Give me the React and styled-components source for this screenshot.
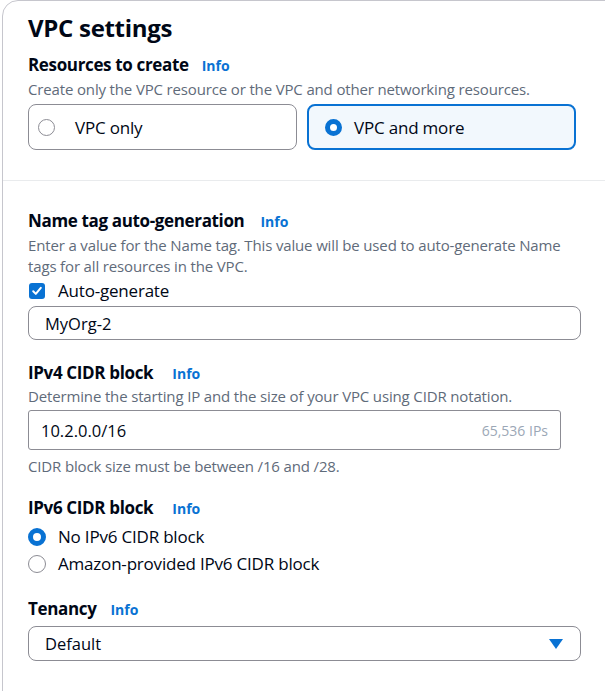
import React from "react";
import styled, { createGlobalStyle } from "styled-components";

const GlobalStyle = createGlobalStyle`
  html, body {
    margin: 0;
    padding: 0;
    background: #fff;
    overflow: hidden;
  }
  body {
    font-family: "Open Sans", "Noto Sans", sans-serif;
    color: #000716;
  }
`;

const Card = styled.div`
  margin-left: 2px;
  width: 640px;
  border: 1px solid #c6c6cd;
  border-radius: 16px;
  box-sizing: border-box;
  height: 720px;
`;

const Section = styled.div`
  padding: ${(p) => p.$pad};
  display: flex;
  flex-direction: column;
  border-bottom: ${(p) => (p.$divider ? "1px solid #e9ebed" : "none")};
`;

const Heading = styled.h2`
  margin: 0;
  font-size: 24px;
  line-height: 30px;
  font-weight: 700;
  letter-spacing: -0.3px;
`;

const LabelRow = styled.div`
  display: flex;
  align-items: baseline;
  gap: ${(p) => p.$gap || 15}px;
  margin-top: ${(p) => p.$mt}px;
  line-height: 22px;
`;

const Label = styled.span`
  font-size: 17px;
  font-weight: 700;
  letter-spacing: -0.35px;
`;

const InfoLink = styled.a`
  font-size: 14px;
  font-weight: 700;
  color: #0972d3;
  text-decoration: none;
`;

const Description = styled.div`
  margin-top: ${(p) => p.$mt}px;
  font-size: 15px;
  line-height: ${(p) => p.$lh || 20}px;
  color: #5f6b7a;
  letter-spacing: -0.15px;
  max-width: ${(p) => p.$maxw || "none"};
`;

const Tiles = styled.div`
  display: grid;
  grid-template-columns: 269px 269px;
  gap: 10px;
  margin-top: 5px;
`;

const Tile = styled.div`
  box-sizing: border-box;
  height: 46px;
  display: flex;
  align-items: center;
  gap: ${(p) => (p.$selected ? 12 : 20)}px;
  padding-left: ${(p) => (p.$selected ? 16 : 9)}px;
  border-radius: 8px;
  border: ${(p) => (p.$selected ? "2px solid #0972d3" : "1px solid #8c8c94")};
  background: ${(p) => (p.$selected ? "#f2f8fd" : "#fff")};
  font-size: 17px;
  letter-spacing: -0.2px;
`;

const Radio = styled.span`
  box-sizing: border-box;
  flex: none;
  width: ${(p) => p.$size || 18}px;
  height: ${(p) => p.$size || 18}px;
  border-radius: 50%;
  background: #fff;
  border: ${(p) => (p.$checked ? "5px solid #0972d3" : "1.5px solid #8c8c94")};
`;

const OptionRow = styled.label`
  display: flex;
  align-items: center;
  gap: 12px;
  height: 27px;
  font-size: 17px;
  letter-spacing: -0.2px;
  margin-top: ${(p) => p.$mt || 0}px;
`;

const CheckBox = styled.span`
  flex: none;
  width: 16px;
  height: 16px;
  margin: 0 1px;
  border-radius: 3px;
  background: #0972d3;
  display: flex;
  align-items: center;
  justify-content: center;
`;

const Input = styled.div`
  box-sizing: border-box;
  width: ${(p) => p.$w}px;
  height: ${(p) => p.$h}px;
  margin-top: ${(p) => p.$mt}px;
  display: flex;
  align-items: center;
  justify-content: space-between;
  padding: 0 ${(p) => p.$pr || 16}px 0 ${(p) => p.$pl || 16}px;
  border: 1px solid #8c8c94;
  border-radius: ${(p) => p.$r}px;
  font-size: 16.5px;
`;

const Suffix = styled.span`
  font-size: 14px;
  color: #9ba7b6;
`;

const Caret = () => (
  <svg width="14" height="10" viewBox="0 0 14 10">
    <path d="M0 0 H14 L7 10 Z" fill="#0972d3" />
  </svg>
);

const Check = () => (
  <svg width="12" height="12" viewBox="0 0 12 12">
    <path
      d="M2.2 6.3 L4.8 8.9 L9.8 2.8"
      fill="none"
      stroke="#fff"
      strokeWidth="2"
      strokeLinecap="round"
      strokeLinejoin="round"
    />
  </svg>
);

const App = () => {
  return (
    <>
      <GlobalStyle />
      <Card>
        <Section $pad="12px 0 30px 25px" $divider>
          <Heading>VPC settings</Heading>
          <LabelRow $mt={11} $gap={13}>
            <Label>Resources to create</Label>
            <InfoLink>Info</InfoLink>
          </LabelRow>
          <Description $mt={2}>
            Create only the VPC resource or the VPC and other networking
            resources.
          </Description>
          <Tiles>
            <Tile>
              <Radio $size={17} />
              VPC only
            </Tile>
            <Tile $selected>
              <Radio $checked $size={17} />
              VPC and more
            </Tile>
          </Tiles>
        </Section>

        <Section $pad="29px 0 0 25px">
          <LabelRow $mt={0} $gap={16}>
            <Label>Name tag auto-generation</Label>
            <InfoLink>Info</InfoLink>
          </LabelRow>
          <Description $mt={2} $lh={21} $maxw="545px">
            Enter a value for the Name tag. This value will be used to
            auto-generate Name tags for all resources in the VPC.
          </Description>
          <OptionRow $mt={0}>
            <CheckBox>
              <Check />
            </CheckBox>
            Auto-generate
          </OptionRow>
          <Input $w={553} $h={34} $r={8} $mt={2}>
            MyOrg-2
          </Input>

          <LabelRow $mt={22} $gap={19}>
            <Label>IPv4 CIDR block</Label>
            <InfoLink>Info</InfoLink>
          </LabelRow>
          <Description $mt={1}>
            Determine the starting IP and the size of your VPC using CIDR
            notation.
          </Description>
          <Input $w={533} $h={40} $r={3} $mt={4} $pl={12} $pr={12}>
            10.2.0.0/16
            <Suffix>65,536 IPs</Suffix>
          </Input>
          <Description $mt={7} $lh={18}>
            CIDR block size must be between /16 and /28.
          </Description>

          <LabelRow $mt={22} $gap={19}>
            <Label>IPv6 CIDR block</Label>
            <InfoLink>Info</InfoLink>
          </LabelRow>
          <OptionRow $mt={3}>
            <Radio $checked />
            No IPv6 CIDR block
          </OptionRow>
          <OptionRow>
            <Radio />
            Amazon-provided IPv6 CIDR block
          </OptionRow>

          <LabelRow $mt={21} $gap={14}>
            <Label>Tenancy</Label>
            <InfoLink>Info</InfoLink>
          </LabelRow>
          <Input $w={553} $h={35} $r={8} $mt={5} $pr={17}>
            Default
            <Caret />
          </Input>
        </Section>
      </Card>
    </>
  );
};

export default App;
